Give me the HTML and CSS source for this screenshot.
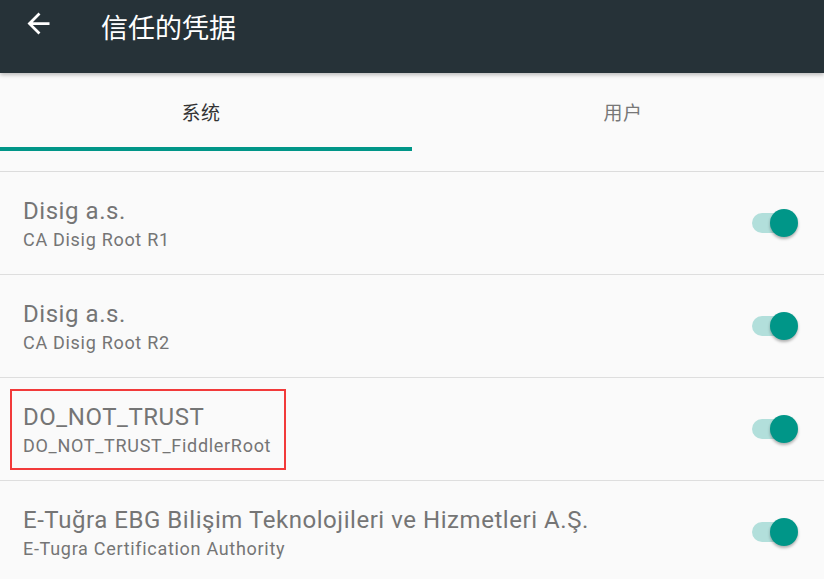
FILE: index.html
```html
<!DOCTYPE html>
<html lang="zh">
<head>
<meta charset="utf-8">
<link rel="stylesheet" href="styles.css">
</head>
<body>
<header class="appbar">
  <svg class="back" width="24" height="24" viewBox="0 0 24 24"><path d="M20 11H7.83l5.59-5.59L12 4l-8 8 8 8 1.41-1.41L7.83 13H20v-2z" fill="#fff"/></svg>
  <h1 class="title">信任的凭据</h1>
</header>
<nav class="tabs">
  <div class="tab active">系统</div>
  <div class="tab other">用户</div>
</nav>
<ul class="list">
  <li class="row">
    <div class="texts"><div class="name">Disig a.s.</div><div class="sub">CA Disig Root R1</div></div>
    <span class="switch"><span class="track"></span><span class="thumb"></span></span>
  </li>
  <li class="row">
    <div class="texts"><div class="name">Disig a.s.</div><div class="sub">CA Disig Root R2</div></div>
    <span class="switch"><span class="track"></span><span class="thumb"></span></span>
  </li>
  <li class="row">
    <div class="texts"><div class="name">DO_NOT_TRUST</div><div class="sub">DO_NOT_TRUST_FiddlerRoot</div></div>
    <span class="switch"><span class="track"></span><span class="thumb"></span></span>
    <span class="highlight"></span>
  </li>
  <li class="row">
    <div class="texts"><div class="name">E-Tuğra EBG Bilişim Teknolojileri ve Hizmetleri A.Ş.</div><div class="sub">E-Tugra Certification Authority</div></div>
    <span class="switch"><span class="track"></span><span class="thumb"></span></span>
  </li>
</ul>
</body>
</html>
```
FILE: styles.css
```css
html, body {
  margin: 0;
  padding: 0;
  background: #fafafa;
  font-family: Roboto, "Noto Sans CJK SC", sans-serif;
  overflow: hidden;
}
.appbar {
  height: 73px;
  background: #263238;
  display: flex;
  align-items: flex-start;
  position: relative;
  z-index: 2;
  box-shadow: 0 2px 4px rgba(0,0,0,0.25);
}
.back {
  width: 33px;
  height: 33px;
  margin: 7px 0 0 22px;
}
.title {
  margin: 10px 0 0 46px;
  font-size: 27px;
  font-weight: 400;
  color: #fff;
  line-height: 38px;
}
.tabs {
  display: flex;
  height: 98px;
  border-bottom: 1px solid #dcdcdc;
}
.tab {
  flex: 1;
  display: flex;
  justify-content: center;
  padding-top: 29px;
  box-sizing: border-box;
  font-size: 19px;
  line-height: 24px;
  color: #777;
  letter-spacing: 0.5px;
}
.tab.active {
  color: #333;
  border-bottom: 4px solid #009688;
  height: 78px;
  padding-right: 10px;
}
.tab.other {
  padding-left: 10px;
}
.list {
  list-style: none;
  margin: 0;
  padding: 0;
}
.row {
  position: relative;
  height: 102px;
  border-bottom: 1px solid #dedede;
  display: flex;
  align-items: center;
  padding: 0 26px 0 23px;
}
.texts {
  flex: 1;
  padding-top: 3px;
}
.name {
  font-size: 24px;
  line-height: 30px;
  color: #757575;
  letter-spacing: 0.55px;
}
.sub {
  font-size: 18px;
  line-height: 28px;
  color: #757575;
  letter-spacing: 0.7px;
}
.switch {
  position: relative;
  width: 46px;
  height: 28px;
}
.track {
  position: absolute;
  left: 0;
  top: 4px;
  width: 40px;
  height: 20px;
  border-radius: 10px;
  background: #b2dfdb;
}
.thumb {
  position: absolute;
  right: 0;
  top: 0;
  width: 28px;
  height: 28px;
  border-radius: 50%;
  background: #009688;
  box-shadow: 0 2px 3px rgba(0,0,0,0.3);
}
.highlight {
  position: absolute;
  left: 10px;
  top: 11px;
  width: 272px;
  height: 77px;
  border: 2px solid #f23a3a;
}
```
